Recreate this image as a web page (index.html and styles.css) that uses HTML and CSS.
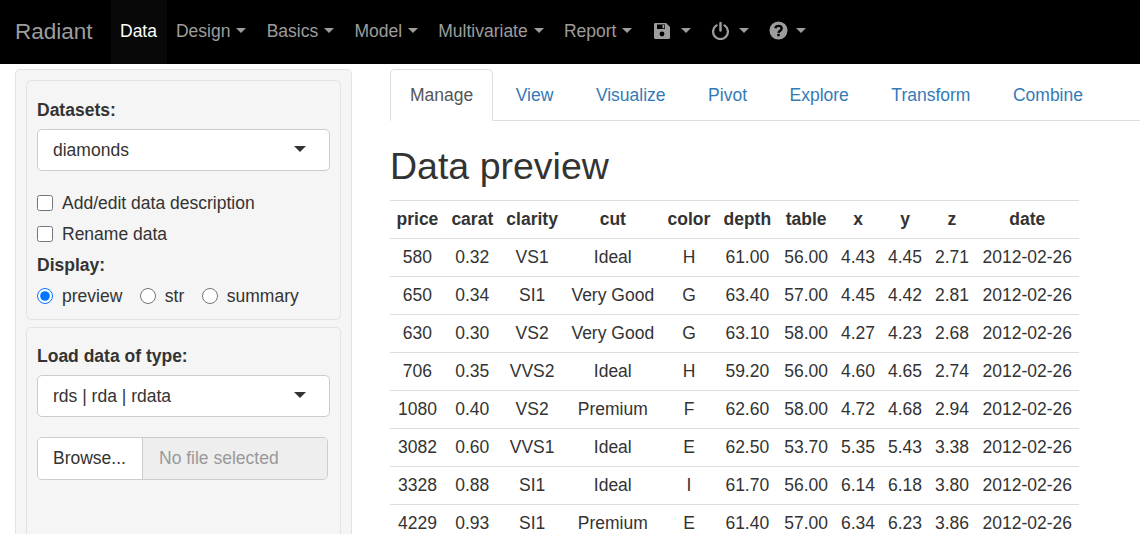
FILE: index.html
```html
<!DOCTYPE html>
<html>

<head>
  <meta charset="utf-8">
  <title>Radiant</title>
  <link rel="stylesheet" href="styles.css">
</head>

<body>
  <nav class="navbar">
    <a class="brand">Radiant</a>
    <ul class="nav-items">
      <li class="active"><a>Data</a></li>
      <li><a>Design <b class="caret"></b></a></li>
      <li><a>Basics <b class="caret"></b></a></li>
      <li><a>Model <b class="caret"></b></a></li>
      <li><a>Multivariate <b class="caret"></b></a></li>
      <li><a>Report <b class="caret"></b></a></li>
      <li><a>
        <svg class="icon icon-save" viewBox="0 0 18 18">
          <path fill="#9d9d9d" d="M2 1h11l4 4v10.500a1.500 1.500 0 0 1-1.500 1.500h-13A1.500 1.500 0 0 1 1 15.500v-13A1.500 1.500 0 0 1 2 1z"/>
          <rect x="4" y="2.500" width="8" height="4.500" fill="#000"/>
          <rect x="9.500" y="3" width="1.800" height="3.200" fill="#9d9d9d"/>
          <circle cx="9" cy="12" r="2.400" fill="#000"/>
        </svg>
        <b class="caret"></b></a></li>
      <li><a>
        <svg class="icon icon-power" viewBox="0 0 20 20">
          <path fill="none" stroke="#9d9d9d" stroke-width="2.400" stroke-linecap="round" d="M5.800 4.600a7.800 7.800 0 1 0 8.400 0"/>
          <path fill="none" stroke="#9d9d9d" stroke-width="2.600" stroke-linecap="round" d="M10 2v8"/>
        </svg>
        <b class="caret"></b></a></li>
      <li><a>
        <svg class="icon icon-help" viewBox="0 0 20 20">
          <circle cx="10" cy="10" r="9.500" fill="#9d9d9d"/>
          <path fill="none" stroke="#000" stroke-width="2.500" d="M6.700 7.600c.4-1.700 1.700-2.500 3.300-2.500 1.900 0 3.300 1.100 3.300 2.700 0 2.300-3.100 2.400-3.300 4.600"/>
          <rect x="8.700" y="13.500" width="2.600" height="2.500" fill="#000"/>
        </svg>
        <b class="caret"></b></a></li>
    </ul>
  </nav>

  <div class="page">
    <aside class="sidebar">
      <section class="well">
        <label class="field-label">Datasets:</label>
        <div class="select">diamonds<span class="select-arrow"></span></div>
        <label class="check first"><input type="checkbox"> Add/edit data description</label>
        <label class="check"><input type="checkbox"> Rename data</label>
        <label class="field-label display-label">Display:</label>
        <div class="radios">
          <label><input type="radio" name="display" checked> preview</label>
          <label><input type="radio" name="display"> str</label>
          <label><input type="radio" name="display"> summary</label>
        </div>
      </section>
      <section class="well well-load">
        <label class="field-label">Load data of type:</label>
        <div class="select">rds | rda | rdata<span class="select-arrow"></span></div>
        <div class="file-input">
          <span class="browse">Browse...</span>
          <span class="file-name">No file selected</span>
        </div>
      </section>
    </aside>

    <main class="content">
      <ul class="tabs">
        <li class="active"><a>Manage</a></li>
        <li><a>View</a></li>
        <li><a>Visualize</a></li>
        <li><a>Pivot</a></li>
        <li><a>Explore</a></li>
        <li><a>Transform</a></li>
        <li><a>Combine</a></li>
      </ul>
      <h2>Data preview</h2>
      <table>
        <thead>
          <tr><th>price</th><th>carat</th><th>clarity</th><th>cut</th><th>color</th><th>depth</th><th>table</th><th>x</th><th>y</th><th>z</th><th>date</th></tr>
        </thead>
        <tbody>
          <tr><td>580</td><td>0.32</td><td>VS1</td><td>Ideal</td><td>H</td><td>61.00</td><td>56.00</td><td>4.43</td><td>4.45</td><td>2.71</td><td>2012-02-26</td></tr>
          <tr><td>650</td><td>0.34</td><td>SI1</td><td>Very Good</td><td>G</td><td>63.40</td><td>57.00</td><td>4.45</td><td>4.42</td><td>2.81</td><td>2012-02-26</td></tr>
          <tr><td>630</td><td>0.30</td><td>VS2</td><td>Very Good</td><td>G</td><td>63.10</td><td>58.00</td><td>4.27</td><td>4.23</td><td>2.68</td><td>2012-02-26</td></tr>
          <tr><td>706</td><td>0.35</td><td>VVS2</td><td>Ideal</td><td>H</td><td>59.20</td><td>56.00</td><td>4.60</td><td>4.65</td><td>2.74</td><td>2012-02-26</td></tr>
          <tr><td>1080</td><td>0.40</td><td>VS2</td><td>Premium</td><td>F</td><td>62.60</td><td>58.00</td><td>4.72</td><td>4.68</td><td>2.94</td><td>2012-02-26</td></tr>
          <tr><td>3082</td><td>0.60</td><td>VVS1</td><td>Ideal</td><td>E</td><td>62.50</td><td>53.70</td><td>5.35</td><td>5.43</td><td>3.38</td><td>2012-02-26</td></tr>
          <tr><td>3328</td><td>0.88</td><td>SI1</td><td>Ideal</td><td>I</td><td>61.70</td><td>56.00</td><td>6.14</td><td>6.18</td><td>3.80</td><td>2012-02-26</td></tr>
          <tr><td>4229</td><td>0.93</td><td>SI1</td><td>Premium</td><td>E</td><td>61.40</td><td>57.00</td><td>6.34</td><td>6.23</td><td>3.86</td><td>2012-02-26</td></tr>
        </tbody>
      </table>
    </main>
  </div>
</body>

</html>
```

FILE: styles.css
```css
* {
  box-sizing: border-box;
}

html,
body {
  height: 534px;
  margin: 0;
  overflow: hidden;
}

body {
  background-color: #fff;
  color: #333;
  font-family: "Liberation Sans", Arial, sans-serif;
  font-size: 17.5px;
  line-height: 26px;
}

ul {
  list-style: none;
  margin: 0;
  padding: 0;
}

/* navbar */
.navbar {
  display: flex;
  align-items: stretch;
  height: 64px;
  background-color: #000;
  color: #9d9d9d;
}

.brand {
  flex: none;
  width: 111px;
  padding: 19px 0 0 15px;
  font-size: 22.500px;
  line-height: 26px;
}

.nav-items {
  display: flex;
}

.nav-items li {
  display: flex;
}

.nav-items a {
  display: flex;
  align-items: center;
  padding: 0 9px 3px;
}

.nav-items li.active a {
  padding-right: 10px;
  background-color: #080808;
  color: #fff;
}

.caret {
  display: inline-block;
  width: 0;
  height: 0;
  margin-left: 6px;
  margin-right: 2.200px;
  border-top: 5px solid;
  border-left: 5px solid transparent;
  border-right: 5px solid transparent;
}

.icon {
  display: block;
}

.icon-save {
  width: 18px;
  height: 18px;
  margin-right: 4px;
}

.icon-power {
  width: 19px;
  height: 19px;
  margin-right: 3px;
}

.icon-help {
  width: 19px;
  height: 19px;
  margin-right: 2px;
}

/* sidebar */
.page {
  display: flex;
  align-items: flex-start;
  padding-top: 5px;
}

.sidebar {
  flex: none;
  width: 337px;
  height: 465px;
  margin-left: 15px;
  padding: 10px 10px 0;
  background-color: #f5f5f5;
  border: 1px solid #e3e3e3;
  border-bottom: 0;
  border-radius: 5px 5px 0 0;
}

.well {
  width: 315px;
  padding: 16px 10px 0;
  background-color: #f5f5f5;
  border: 1px solid #e3e3e3;
  border-radius: 5px;
}

.well:first-child {
  height: 240px;
}

.well-load {
  height: 207px;
  margin-top: 7px;
  padding-top: 15px;
  border-bottom: 0;
  border-radius: 5px 5px 0 0;
}

.field-label {
  display: block;
  margin-bottom: 6px;
  font-weight: bold;
}

.select {
  position: relative;
  width: 293px;
  height: 42px;
  padding: 7px 15px;
  background-color: #fff;
  border: 1px solid #ccc;
  border-radius: 5px;
}

.select-arrow {
  position: absolute;
  right: 23px;
  top: 16px;
  border-top: 6px solid #333;
  border-left: 6px solid transparent;
  border-right: 6px solid transparent;
}

.check {
  display: flex;
  align-items: center;
  height: 26px;
  margin-top: 5px;
}

.check.first {
  margin-top: 19px;
}

.check input,
.radios input {
  flex: none;
  width: 16px;
  height: 16px;
  margin: 0 9px 0 0;
}

.display-label {
  margin-top: 5px;
  margin-bottom: 5px;
}

.radios {
  display: flex;
  gap: 17.500px;
}

.radios label {
  display: flex;
  align-items: center;
}

.file-input {
  display: flex;
  width: 291px;
  height: 43px;
  margin-top: 20px;
  border: 1px solid #ccc;
  border-radius: 5px;
  overflow: hidden;
}

.browse {
  width: 105px;
  padding: 7px 0 0 15px;
  background-color: #fff;
  border-right: 1px solid #ccc;
}

.file-name {
  flex: 1;
  padding: 7px 0 0 16px;
  background-color: #eee;
  color: #999;
}

/* main */
.content {
  flex: 1;
  min-width: 0;
  margin-left: 38px;
}

.tabs {
  display: flex;
  height: 52px;
  border-bottom: 1px solid #ddd;
}

.tabs li {
  margin-right: 2.500px;
}

.tabs a {
  display: block;
  height: 52px;
  padding: 12px 19px;
  border: 1px solid transparent;
  border-radius: 5px 5px 0 0;
  color: #337ab7;
}

.tabs li.active a {
  background-color: #fff;
  border-color: #ddd #ddd #fff;
  color: #555;
}

h2 {
  margin: 24px 0 13px;
  font-size: 37.500px;
  font-weight: 500;
  line-height: 42px;
}

table {
  border-collapse: collapse;
  width: 689px;
}

th,
td {
  padding: 6px;
  border-top: 1px solid #ddd;
  line-height: 25px;
  text-align: center;
  white-space: nowrap;
}
```
